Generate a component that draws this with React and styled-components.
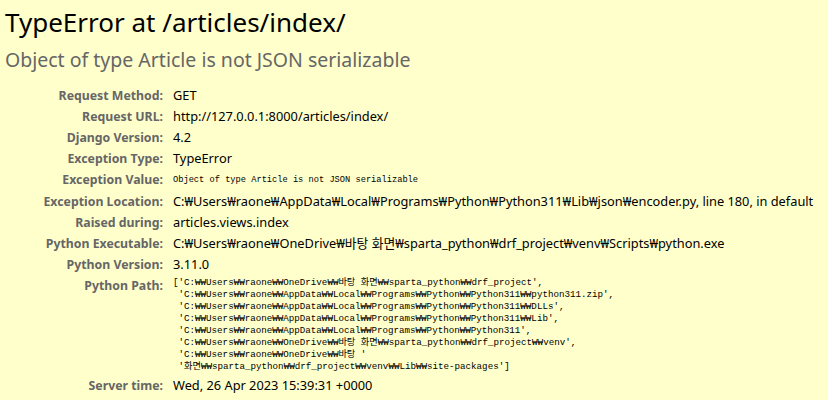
import React from "react";
import styled, { createGlobalStyle } from "styled-components";

const GlobalStyle = createGlobalStyle`
  html, body {
    margin: 0;
    padding: 0;
    background: #ffc;
  }
  body {
    font-family: "Noto Sans", "Noto Sans CJK KR", sans-serif;
    font-size: 13px;
    color: #000;
  }
`;

const Summary = styled.div`
  background: #ffc;
  padding: 6px 5px 10px 5px;
  min-height: 384px;
`;

const Title = styled.h1`
  margin: 0;
  font-size: 26px;
  line-height: 32px;
  font-weight: normal;
  color: #000;
`;

const Subtitle = styled.h2`
  margin: 9px 0 12px 0;
  font-size: 19.5px;
  line-height: 26px;
  font-weight: normal;
  color: #666;
`;

const Meta = styled.div`
  display: grid;
  grid-template-columns: 165px 1fr;
`;

const Label = styled.div`
  text-align: right;
  font-weight: bold;
  font-size: 12.3px;
  color: #666;
  padding: 2px 7px 2px 3px;
  line-height: 17px;
  white-space: nowrap;
`;

const Value = styled.div`
  padding: 2px 3px;
  font-size: 12.8px;
  line-height: 17px;
  white-space: nowrap;
`;

const Code = styled.pre`
  margin: 0;
  padding: ${(p) => p.pad || "0"};
  font-family: "Liberation Mono", "DejaVu Sans Mono", "Noto Sans CJK KR", monospace;
  font-size: ${(p) => p.size || "9px"};
  line-height: ${(p) => p.lh || "17px"};
  white-space: pre;
`;

const pythonPath = [
  "['C:₩₩Users₩₩raone₩₩OneDrive₩₩바탕 화면₩₩sparta_python₩₩drf_project',",
  " 'C:₩₩Users₩₩raone₩₩AppData₩₩Local₩₩Programs₩₩Python₩₩Python311₩₩python311.zip',",
  " 'C:₩₩Users₩₩raone₩₩AppData₩₩Local₩₩Programs₩₩Python₩₩Python311₩₩DLLs',",
  " 'C:₩₩Users₩₩raone₩₩AppData₩₩Local₩₩Programs₩₩Python₩₩Python311₩₩Lib',",
  " 'C:₩₩Users₩₩raone₩₩AppData₩₩Local₩₩Programs₩₩Python₩₩Python311',",
  " 'C:₩₩Users₩₩raone₩₩OneDrive₩₩바탕 화면₩₩sparta_python₩₩drf_project₩₩venv',",
  " 'C:₩₩Users₩₩raone₩₩OneDrive₩₩바탕 '",
  " '화면₩₩sparta_python₩₩drf_project₩₩venv₩₩Lib₩₩site-packages']",
].join("\n");

const rows = [
  ["Request Method:", "GET"],
  ["Request URL:", "http://127.0.0.1:8000/articles/index/"],
  ["Django Version:", "4.2"],
  ["Exception Type:", "TypeError"],
  ["Exception Value:", <Code size="8.7px" pad="1px 0 0 0">Object of type Article is not JSON serializable</Code>],
  [
    "Exception Location:",
    "C:₩Users₩raone₩AppData₩Local₩Programs₩Python₩Python311₩Lib₩json₩encoder.py, line 180, in default",
  ],
  ["Raised during:", "articles.views.index"],
  [
    "Python Executable:",
    "C:₩Users₩raone₩OneDrive₩바탕 화면₩sparta_python₩drf_project₩venv₩Scripts₩python.exe",
  ],
  ["Python Version:", "3.11.0"],
  ["Python Path:", <Code size="9.2px" lh="12px">{pythonPath}</Code>],
  ["Server time:", "Wed, 26 Apr 2023 15:39:31 +0000"],
];

const App = () => {
  return (
    <>
      <GlobalStyle />
      <Summary>
        <Title>TypeError at /articles/index/</Title>
        <Subtitle>Object of type Article is not JSON serializable</Subtitle>
        <Meta>
          {rows.map(([label, value]) => (
            <React.Fragment key={label}>
              <Label>{label}</Label>
              <Value>{value}</Value>
            </React.Fragment>
          ))}
        </Meta>
      </Summary>
    </>
  );
};

export default App;
